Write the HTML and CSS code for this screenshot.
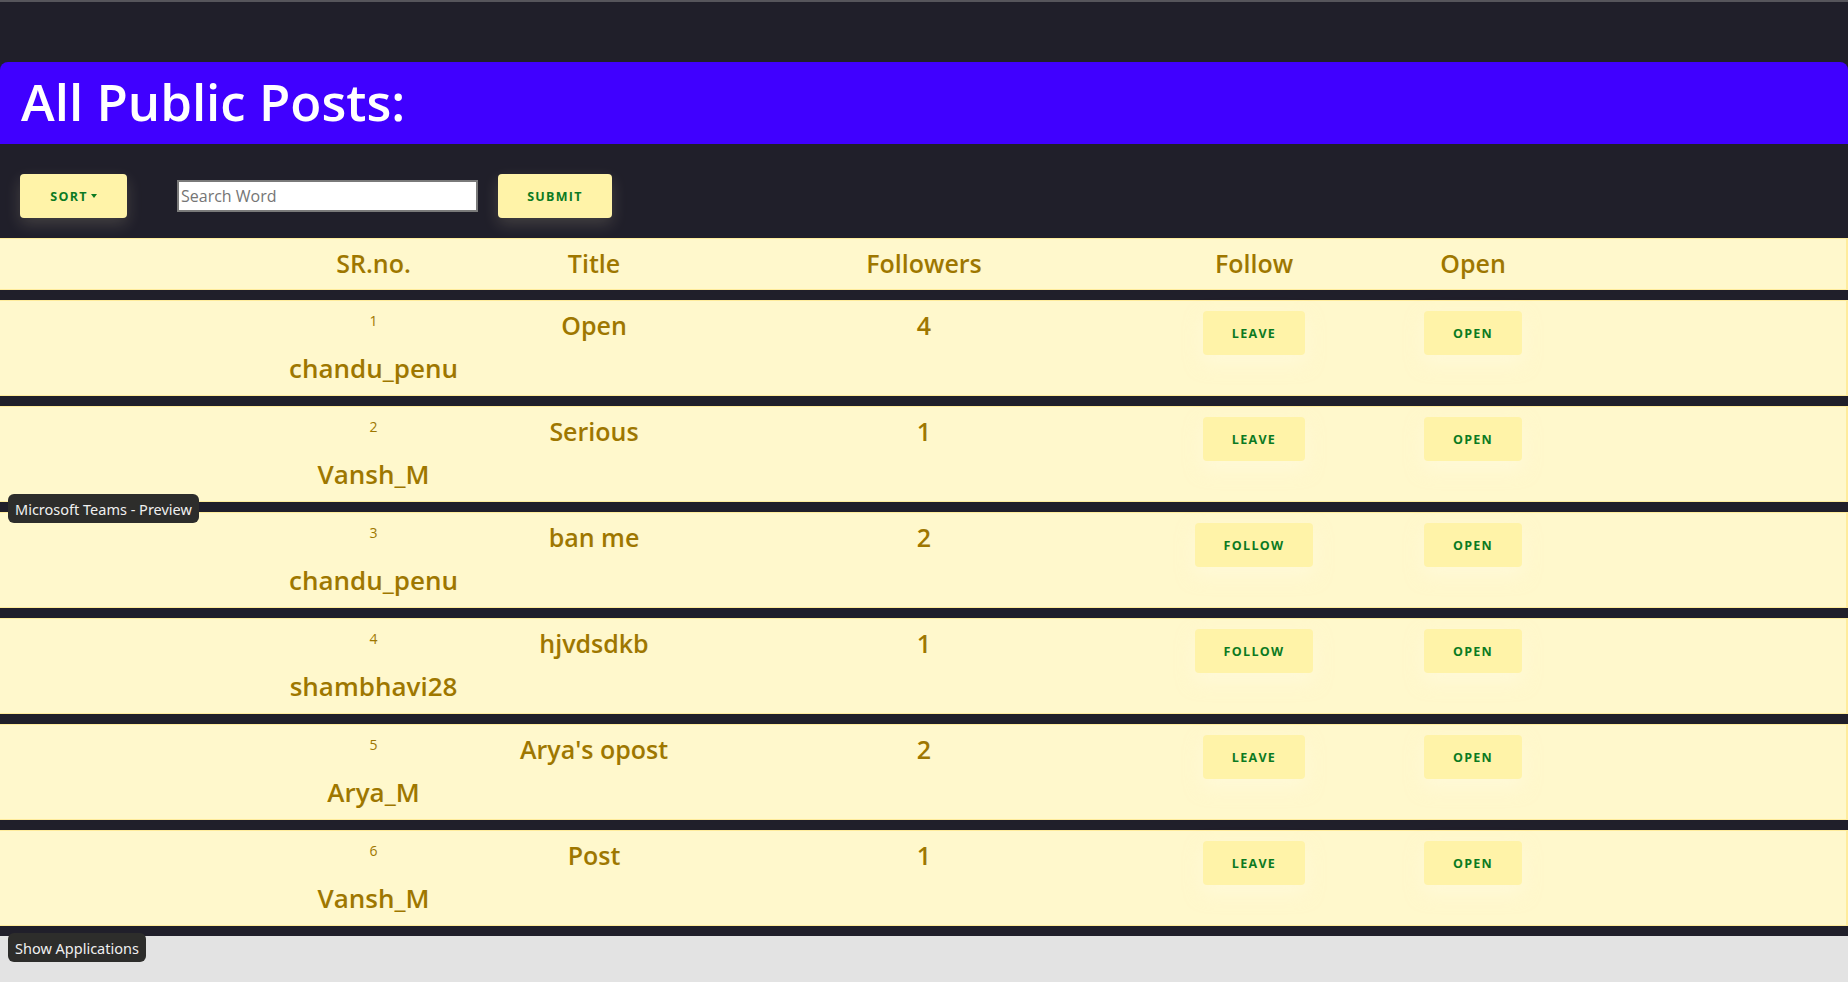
FILE: index.html
```html
<!DOCTYPE html>
<html lang="en">
<head>
<meta charset="utf-8">
<title>All Public Posts</title>
<link rel="stylesheet" href="styles.css">
</head>
<body>
<div class="page">
  <header class="banner">
    <h1 class="banner-title">All Public Posts:</h1>
  </header>

  <div class="toolbar">
    <button class="btn btn-sort">SORT<span class="caret"></span></button>
    <input class="search" type="text" placeholder="Search Word">
    <button class="btn btn-submit">SUBMIT</button>
  </div>

  <div class="table">
    <div class="row head">
      <div class="cell">SR.no.</div>
      <div class="cell">Title</div>
      <div class="cell">Followers</div>
      <div class="cell">Follow</div>
      <div class="cell">Open</div>
    </div>

    <div class="row">
      <div class="cell sr"><span class="num">1</span><span class="user">chandu_penu</span></div>
      <div class="cell big">Open</div>
      <div class="cell big">4</div>
      <div class="cell"><button class="btn btn-row">LEAVE</button></div>
      <div class="cell"><button class="btn btn-row">OPEN</button></div>
    </div>

    <div class="row">
      <div class="cell sr"><span class="num">2</span><span class="user">Vansh_M</span></div>
      <div class="cell big">Serious</div>
      <div class="cell big">1</div>
      <div class="cell"><button class="btn btn-row">LEAVE</button></div>
      <div class="cell"><button class="btn btn-row">OPEN</button></div>
    </div>

    <div class="row">
      <div class="cell sr"><span class="num">3</span><span class="user">chandu_penu</span></div>
      <div class="cell big">ban me</div>
      <div class="cell big">2</div>
      <div class="cell"><button class="btn btn-row">FOLLOW</button></div>
      <div class="cell"><button class="btn btn-row">OPEN</button></div>
    </div>

    <div class="row">
      <div class="cell sr"><span class="num">4</span><span class="user">shambhavi28</span></div>
      <div class="cell big">hjvdsdkb</div>
      <div class="cell big">1</div>
      <div class="cell"><button class="btn btn-row">FOLLOW</button></div>
      <div class="cell"><button class="btn btn-row">OPEN</button></div>
    </div>

    <div class="row">
      <div class="cell sr"><span class="num">5</span><span class="user">Arya_M</span></div>
      <div class="cell big">Arya's opost</div>
      <div class="cell big">2</div>
      <div class="cell"><button class="btn btn-row">LEAVE</button></div>
      <div class="cell"><button class="btn btn-row">OPEN</button></div>
    </div>

    <div class="row">
      <div class="cell sr"><span class="num">6</span><span class="user">Vansh_M</span></div>
      <div class="cell big">Post</div>
      <div class="cell big">1</div>
      <div class="cell"><button class="btn btn-row">LEAVE</button></div>
      <div class="cell"><button class="btn btn-row">OPEN</button></div>
    </div>
  </div>
</div>

<div class="tooltip tip-teams">Microsoft Teams - Preview</div>
<div class="tooltip tip-apps">Show Applications</div>
</body>
</html>
```

FILE: styles.css
```css
* { box-sizing: border-box; }

html, body {
  margin: 0;
  padding: 0;
}

body {
  background: #e3e3e3;
  font-family: "Open Sans", "Noto Sans", sans-serif;
  min-height: 982px;
  position: relative;
}

.page {
  background: #201f2a;
  border-top: 2px solid #56555b;
  padding-top: 60px;
  padding-bottom: 10px;
}

.banner {
  background: #4000ff;
  height: 82px;
  border-radius: 8px 8px 0 0;
  display: flex;
  align-items: center;
  padding-left: 21px;
  padding-bottom: 4px;
}

.banner-title {
  margin: 0;
  color: #ffffff;
  font-size: 51px;
  font-weight: 600;
  line-height: 1;
  letter-spacing: 0;
}

.toolbar {
  display: flex;
  align-items: center;
  height: 94px;
  padding: 10px 20px 0 20px;
}

.btn {
  font-family: "Open Sans", "Noto Sans", sans-serif;
  background: #fff3a8;
  color: #0b7a22;
  font-weight: 700;
  font-size: 12.5px;
  letter-spacing: 1.3px;
  border: none;
  border-radius: 4px;
  height: 44px;
  padding: 0 28px;
  display: inline-flex;
  align-items: center;
  justify-content: center;
  box-shadow: 0 6px 16px rgba(255, 240, 190, 0.16);
}

.btn-sort {
  width: 107px;
  padding: 0;
}

.caret {
  display: inline-block;
  width: 0;
  height: 0;
  margin-left: 3px;
  border-top: 4px solid #0b7a22;
  border-left: 3px solid transparent;
  border-right: 3px solid transparent;
}

.search {
  margin-left: 50px;
  width: 301px;
  height: 32px;
  border: 2px solid #7a7a7a;
  background: #ffffff;
  padding: 0 2px;
  font-family: "Open Sans", "Noto Sans", sans-serif;
  font-size: 16px;
  color: #222;
}

.search::placeholder {
  color: #757575;
}

.btn-submit {
  margin-left: 20px;
  width: 114px;
  padding: 0;
}

.table {
  display: flex;
  flex-direction: column;
  gap: 10px;
}

.row {
  display: grid;
  grid-template-columns: 221px 220px 440px 220px 218px;
  padding-left: 263px;
  background: #fff8cc;
  border-top: 1px solid #ffec9c;
  border-bottom: 1px solid #ffec9c;
  border-right: 2px solid #ffec9c;
  height: 96px;
  color: #9e7700;
}

.row.head {
  height: 52px;
  align-items: center;
}

.cell {
  display: flex;
  flex-direction: column;
  align-items: center;
  text-align: center;
  white-space: nowrap;
}

.head .cell {
  font-size: 25px;
  font-weight: 600;
  padding-bottom: 2px;
}

.big {
  font-size: 25px;
  font-weight: 600;
  line-height: 34px;
  padding-top: 7px;
}

.sr {
  padding-top: 10px;
}

.num {
  font-size: 14px;
  line-height: 20px;
  font-weight: 500;
}

.user {
  font-size: 26px;
  font-weight: 600;
  line-height: 34px;
  margin-top: 20px;
}

.row .btn-row {
  margin-top: 10px;
  height: 44px;
  padding: 0 29px;
  box-shadow: 0 8px 18px rgba(255, 252, 230, 0.5);
}

.tooltip {
  position: absolute;
  left: 8px;
  background: #2d2d2b;
  color: #f0f0f0;
  font-family: "Noto Sans", "DejaVu Sans", sans-serif;
  font-size: 14.5px;
  border-radius: 6px;
  padding: 0 7px;
  height: 29px;
  display: flex;
  align-items: center;
  letter-spacing: 0;
}

.tip-teams {
  top: 494px;
}

.tip-apps {
  top: 933px;
}
```
